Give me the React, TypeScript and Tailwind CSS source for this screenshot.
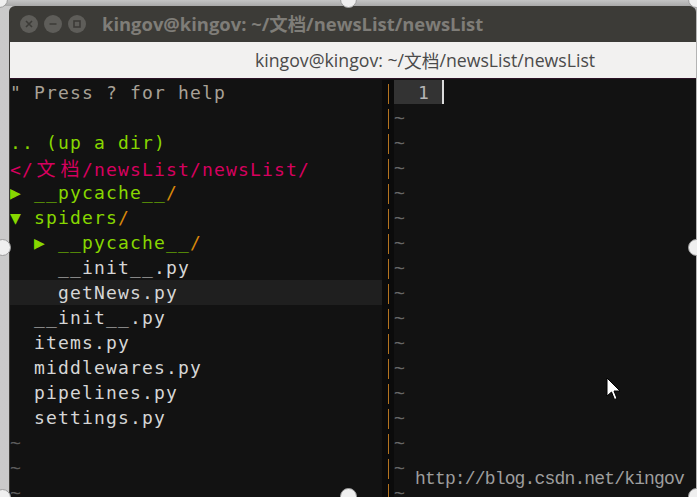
const MONO = "font-['DejaVu_Sans_Mono',monospace] text-[18px] tracking-[1.16px]";

const C = {
  help: "text-[#a8a196]",
  green: "text-[#87d700]",
  pink: "text-[#d7005f]",
  orange: "text-[#d7870a]",
  file: "text-[#d6d6d6]",
  tilde: "text-[#5c5c5c]",
};

function Row({ children, hl }: { children?: React.ReactNode; hl?: boolean }) {
  return <div className={`h-[25px] leading-[25px] whitespace-pre ${hl ? "bg-[#1f1f1f]" : ""}`}>{children}</div>;
}

function Cjk({ ch }: { ch: string }) {
  return (
    <span className="inline-block w-[24px] text-center font-['Noto_Sans_CJK_SC',sans-serif] text-[19px] tracking-normal">
      {ch}
    </span>
  );
}

function Dir({ indent, open, name }: { indent: string; open?: boolean; name: string }) {
  return (
    <Row>
      {indent}
      <span className={C.green}>{open ? "▼" : "▶"} {name}</span>
      <span className={C.orange}>/</span>
    </Row>
  );
}

function TitleButton({ kind }: { kind: "close" | "min" | "max" }) {
  return (
    <div className="flex h-[18px] w-[18px] items-center justify-center rounded-full bg-[#5e5d59]">
      <svg width="10" height="10" viewBox="0 0 10 10" fill="none" stroke="#3c3b37" strokeWidth="1.6">
        {kind === "close" && <path d="M2 2 L8 8 M8 2 L2 8" />}
        {kind === "min" && <path d="M1.5 5 H8.5" />}
        {kind === "max" && <rect x="2" y="2" width="6" height="6" />}
      </svg>
    </div>
  );
}

function Handle({ className }: { className: string }) {
  return <div className={`absolute h-[17px] w-[17px] rounded-full border border-[#9c9c9c] bg-[#efefef] ${className}`} />;
}

export default function App() {
  const tildesLeft = [14, 15, 16];
  const rightRows = Array.from({ length: 16 });

  return (
    <div className="relative h-[497px] w-[697px] overflow-hidden bg-gradient-to-r from-[#cacaca] to-[#b4b4b4]">
      <div className="h-[6px] w-full bg-gradient-to-b from-[#c4c4c4] to-[#a9a9a9]" />
      <div className="ml-[9px] flex h-[491px] w-[687px] flex-col overflow-hidden rounded-t-[6px] bg-[#3c3b37]">
        {/* outer window title */}
        <div className="flex h-[36px] shrink-0 items-center pl-[11px]">
          <div className="flex items-center gap-[6px]">
            <TitleButton kind="close" />
            <TitleButton kind="min" />
            <TitleButton kind="max" />
          </div>
          <div className="ml-[16px] font-['Open_Sans',sans-serif] text-[18.4px] font-bold text-[#7f7d78]">
            kingov@kingov: ~/<span className="font-['Noto_Sans_CJK_SC',sans-serif]">文档</span>/newsList/newsList
          </div>
        </div>

        <div className="flex flex-1 flex-col pl-[1px]">
          {/* terminal header bar */}
          <div className="flex h-[36px] shrink-0 items-center bg-[#f2f1f0] pl-[245px] font-['Open_Sans',sans-serif] text-[17.7px] text-[#4a4a4a]">
            kingov@kingov: ~/<span className="font-['Noto_Sans_CJK_SC',sans-serif]">文档</span>/newsList/newsList
          </div>
          <div className="h-[1px] shrink-0 bg-[#2c1226]" />

          {/* terminal */}
          <div className={`flex flex-1 overflow-hidden bg-[#121212] pt-[1px] ${MONO}`}>
            <div className="w-[372px] shrink-0">
              <Row><span className={C.help}>" Press ? for help</span></Row>
              <Row />
              <Row><span className={C.green}>.. (up a dir)</span></Row>
              <Row>
                <span className={C.pink}>
                  &lt;/<Cjk ch="文" /><Cjk ch="档" />/newsList/newsList/
                </span>
              </Row>
              <Dir indent="" name="__pycache__" />
              <Dir indent="" open name="spiders" />
              <Dir indent="  " name="__pycache__" />
              <Row><span className={C.file}>    __init__.py</span></Row>
              <Row hl><span className={C.file}>    getNews.py</span></Row>
              <Row><span className={C.file}>  __init__.py</span></Row>
              <Row><span className={C.file}>  items.py</span></Row>
              <Row><span className={C.file}>  middlewares.py</span></Row>
              <Row><span className={C.file}>  pipelines.py</span></Row>
              <Row><span className={C.file}>  settings.py</span></Row>
              {tildesLeft.map((i) => (
                <Row key={i}><span className={C.tilde}>~</span></Row>
              ))}
            </div>

            {/* vertical split */}
            <div className="flex w-[12px] shrink-0 flex-col bg-[#0b0b0b]">
              {Array.from({ length: 17 }).map((_, i) => (
                <div key={i} className="flex h-[25px] shrink-0 justify-center pt-[4px]">
                  <div className="h-[20px] w-[1px] bg-[#b4731f]" />
                </div>
              ))}
            </div>

            <div className="flex-1">
              <div className="flex h-[25px] leading-[25px]">
                <div className="h-[24px] w-[48px] whitespace-pre bg-[#333333] text-[#b5b5b5]">  1 </div>
                <div className="h-[24px] w-[2px] bg-[#dcdcdc]" />
              </div>
              {rightRows.map((_, i) => (
                <Row key={i}><span className="text-[#666666]">~</span></Row>
              ))}
            </div>
          </div>
        </div>
      </div>

      {/* watermark */}
      <div className="absolute left-[415px] top-[466px] font-['Liberation_Mono',monospace] text-[18px] tracking-[-0.84px] text-[#9e9e9e]">
        http://blog.csdn.net/kingov
      </div>

      {/* mouse pointer */}
      <svg className="absolute left-[606px] top-[377px]" width="16" height="26" viewBox="0 0 16 26">
        <path d="M1 1 L1 19 L5.5 15 L8.5 22.5 L11 21.5 L8 14 L14 14 Z" fill="#ffffff" stroke="#000000" strokeWidth="1" strokeLinejoin="round" />
      </svg>

      {/* selection handles */}
      <Handle className="left-[-9px] top-[-9px]" />
      <Handle className="left-[340px] top-[-9px]" />
      <Handle className="left-[688px] top-[-9px]" />
      <Handle className="left-[-6px] top-[239px]" />
      <Handle className="left-[688px] top-[239px]" />
      <Handle className="left-[-6px] top-[489px]" />
      <Handle className="left-[340px] top-[488px]" />
      <Handle className="left-[688px] top-[488px]" />
    </div>
  );
}
